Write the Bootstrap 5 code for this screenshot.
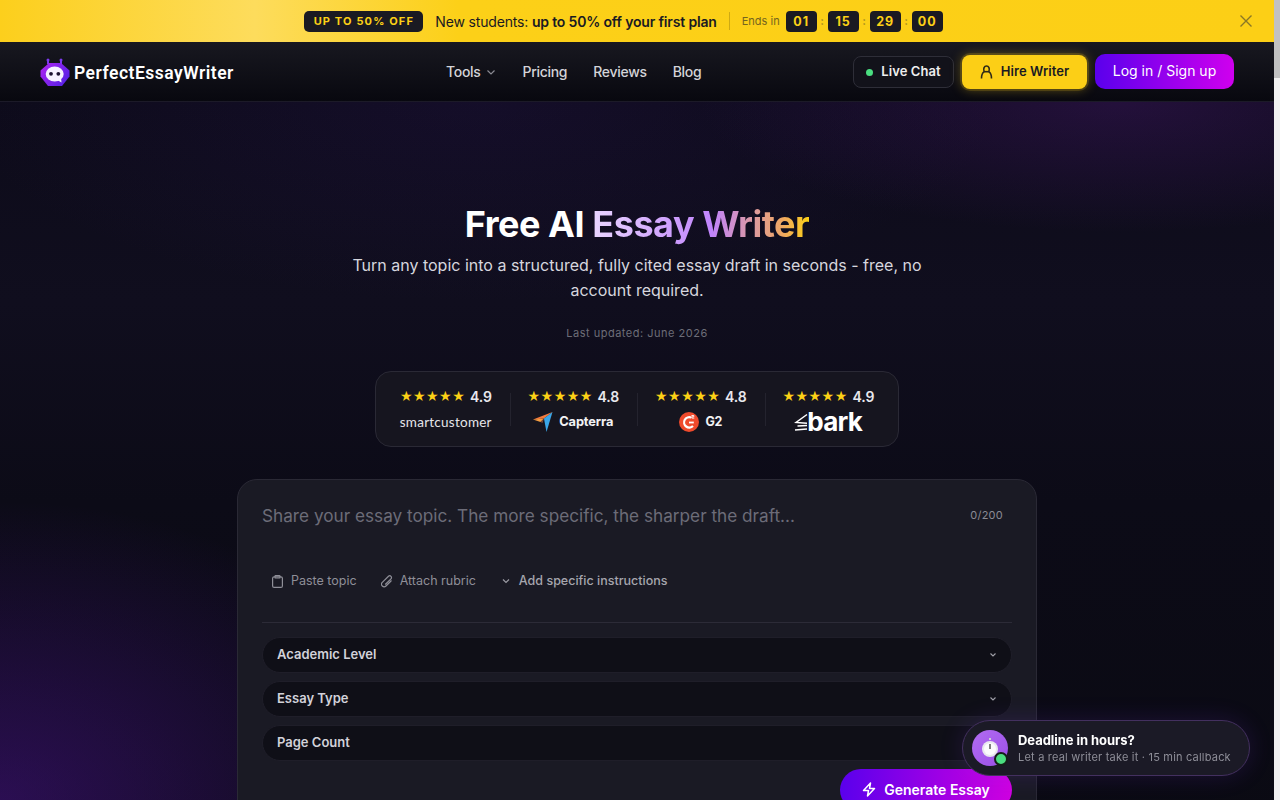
<!DOCTYPE html>
<html lang="en">
<head>
  <meta charset="UTF-8">
  <meta name="viewport" content="width=device-width, initial-scale=1.0">
  <title>Free AI Essay Writer - PerfectEssayWriter</title>
  <link href="https://cdn.jsdelivr.net/npm/bootstrap@5.3.2/dist/css/bootstrap.min.css" rel="stylesheet">
  <style>
    body { background: #0a0a12; font-family: Inter, "Liberation Sans", sans-serif; color: #fff; padding-right: 6px; overflow-x: hidden; }
    .fake-scroll { position: fixed; top: 0; right: 0; bottom: 0; width: 6px; background: #f1f1f1; z-index: 9; }
    .fake-thumb { height: 78px; background: #c1c1c1; }

    .promo-bar { height: 42px; padding-right: 27px; background: linear-gradient(90deg, #fccf1c 0, #fddc5c 20%, #fcd018 36%, #fccf16 100%); color: #1a1a22; font-size: 14px; }
    .promo-tag { background: #1a1a22; color: #fcd116; font-size: 11px; font-weight: 700; letter-spacing: 1.15px; border-radius: 5px; width: 119px; text-align: center; height: 21px; line-height: 21px; }
    .promo-text { letter-spacing: -.17px; margin-left: 12px; }
    .promo-sep { width: 1px; height: 18px; background: rgba(0,0,0,.18); margin: 0 12px; }
    .promo-ends { font-size: 11px; color: #75651f; margin-right: 6px; }
    .time-box { width: 31px; height: 21px; background: #1a1a22; color: #fcd116; font-size: 12.5px; font-weight: 700; letter-spacing: 1px; border-radius: 4px; line-height: 21px; text-align: center; }
    .time-colon { width: 11px; text-align: center; color: #a58c22; font-size: 11px; font-weight: 700; }
    .promo-close { right: 21px; top: 14px; background: none; border: 0; padding: 0; line-height: 0; }

    .top-nav { height: 60px; padding: 0 40px; background: linear-gradient(180deg, #181820, #08080f); border-bottom: 1px solid #1c1a28; }
    .brand-link { width: 194px; flex: none; margin-top: 2px; }
    .brand-name { font-family: Roboto, sans-serif; font-size: 17.5px; font-weight: 600; color: #fff; letter-spacing: .5px; padding-top: 1px; }
    .nav-items { gap: 26px; margin-left: 212px; }
    .nav-items a { color: #d4d4d8; font-size: 14px; letter-spacing: -.3px; text-decoration: none; font-weight: 500; }
    .nav-right { padding-top: 1px; }
    .btn-chat, .btn-hire { font-size: 13px; font-weight: 600; color: #eee; letter-spacing: .08px; }
    .btn-chat { width: 101px; height: 32px; border: 1px solid #2e2e38; border-radius: 8px; background: #12121a; padding: 0; }
    .chat-dot { width: 7px; height: 7px; background: #4ade80; border-radius: 50%; }
    .btn-hire { width: 125px; height: 34px; border: 0; border-radius: 8px; background: #fccf16; color: #1a1a22; padding: 0; box-shadow: 0 0 12px rgba(252,207,22,.38), 0 0 0 2px rgba(252,207,22,.16); }
    .btn-login { width: 139px; height: 35px; margin-bottom: 1px; border: 0; border-radius: 10px; background: linear-gradient(90deg, #5a00ec, #cf00ee); color: #fff; font-size: 14px; padding: 0 0 2px; }

    .hero-wrap { padding-top: 100px; padding-bottom: 60px;
      background:
        radial-gradient(420px 130px at 1120px 0, rgba(88,28,135,.3), transparent),
        radial-gradient(520px 200px at 480px 0, rgba(60,28,120,.16), transparent),
        radial-gradient(440px 300px at 0 699px, rgba(88,20,170,.42), transparent),
        linear-gradient(180deg, #0d0b1a 0, #100e1e 200px, #0c0b17 400px, #0a0a12 100%); }
    .hero-title { font-size: 36px; font-weight: 700; line-height: 44px; letter-spacing: -.45px; margin: 0 0 7px; }
    .hero-accent { background: linear-gradient(90deg, #e9d5ff 0, #c084fc 55%, #f0a860 88%, #fcd116 100%); -webkit-background-clip: text; background-clip: text; color: transparent; }
    .hero-sub { width: 600px; font-size: 16px; line-height: 25px; color: #d6d6de; margin: 0 auto 22px; }
    .hero-date { font-size: 11px; color: #6d6d78; letter-spacing: .5px; line-height: 16px; margin-bottom: 30px; }

    .rating-strip { width: 524px; height: 76px; background: #16151f; border: 1px solid #2a2935; border-radius: 16px; padding: 0 6px; }
    .rating-item { width: 128px; height: 100%; padding-top: 4px; }
    .rating-item + .rating-item::before { content: ""; position: absolute; left: 0; top: 21px; height: 33px; width: 1px; background: #24232e; }
    .stars { color: #fcd116; font-size: 12.5px; line-height: 18px; }
    .score { font-size: 14px; font-weight: 600; color: #e8e8ee; margin-left: 5px; line-height: 18px; letter-spacing: -.1px; }
    .logo-row { height: 24px; margin-top: 4px; }
    .logo-smart { font-family: Lato, sans-serif; font-size: 13.5px; color: #e6e6ea; letter-spacing: .25px; }
    .logo-cap { font-size: 12.8px; font-weight: 700; color: #f2f2f4; letter-spacing: -.1px; margin-left: 2px; }
    .logo-g2 { font-size: 12.5px; letter-spacing: -.3px; }
    .logo-bark { font-size: 26px; font-weight: 700; color: #fff; letter-spacing: -.7px; line-height: 24px; margin-left: -1px; }

    .writer-card { width: 800px; margin-top: 32px; background: #1a1a24; border: 1px solid #2a2935; border-radius: 20px; padding: 24px; overflow: hidden; }
    .writer-card::before { content: ""; position: absolute; left: 60px; right: 60px; top: -1px; height: 1px; background: linear-gradient(90deg, transparent, #7e22ce 50%, #d08a3a 80%, transparent); }
    .topic-input { background: transparent; border: 0; resize: none; outline: 0; width: 100%; height: 51px; margin-top: -1px; padding: 0; color: #fff; font-size: 17.2px; line-height: 26px; font-family: inherit; }
    .topic-input::placeholder { color: #6c6c78; }
    .char-count { right: 33px; top: 27px; font-size: 11px; color: #8a8a94; letter-spacing: .25px; }
    .tool-row { height: 40px; margin: 7px 0 21px 10px; gap: 25px; }
    .tool-link { color: #8f8f98; font-size: 12.5px; background: none; border: 0; padding: 0; }
    .tool-attach { gap: 7px; margin-left: -1px; }
    .tool-strong { color: #a6a6ae; font-weight: 500; }
    .card-rule { border-top: 1px solid #2c2b37; opacity: 1; margin: 0 0 14px; }
    .field-pill { height: 36px; border-radius: 18px; background-color: #0f0f17; border: 1px solid #1f1e29; color: #d2d2da; font-size: 13px; font-weight: 600; padding: 0 14px; margin-bottom: 8px; }
    .btn-generate { width: 172px; height: 42px; border: 0; border-radius: 21px; background: linear-gradient(90deg, #5a00ec, #cf00e0); color: #fff; font-size: 14px; font-weight: 600; padding: 0 0 2px; }

    .deadline-pop { position: fixed; left: 962px; top: 720px; width: 288px; height: 56px; border-radius: 28px; background: #1b1a26; border: 1px solid #43305f; box-shadow: 0 0 24px rgba(124,58,237,.16); padding-left: 9px; gap: 10px; z-index: 5; }
    .pop-icon { width: 36px; height: 36px; border-radius: 50%; background: linear-gradient(135deg, #b26cf2, #9a4fe6); flex: none; }
    .pop-dot { right: 0; bottom: 0; width: 14px; height: 14px; border-radius: 50%; background: #4ade80; border: 2px solid #152018; }
    .pop-title { font-size: 13px; font-weight: 700; color: #fff; line-height: 17px; letter-spacing: -.05px; }
    .pop-sub { font-size: 11px; color: #8d8d97; line-height: 16px; letter-spacing: .2px; }
  </style>
</head>
<body>
  <div class="fake-scroll"><div class="fake-thumb"></div></div>

  <div class="promo-bar position-relative d-flex align-items-center justify-content-center">
    <span class="promo-tag">UP TO 50% OFF</span>
    <span class="promo-text">New students: <strong class="fw-semibold">up to 50% off your first plan</strong></span>
    <span class="promo-sep"></span>
    <span class="promo-ends">Ends in</span>
    <span class="d-flex align-items-center">
      <span class="time-box">01</span><span class="time-colon">:</span>
      <span class="time-box">15</span><span class="time-colon">:</span>
      <span class="time-box">29</span><span class="time-colon">:</span>
      <span class="time-box">00</span>
    </span>
    <button class="promo-close position-absolute" aria-label="Close">
      <svg width="14" height="14" viewBox="0 0 14 14" fill="none" stroke="#8a7726" stroke-width="1.4"><path d="M1.500 1.500l11 11M12.500 1.500l-11 11"/></svg>
    </button>
  </div>

  <nav class="top-nav d-flex align-items-center">
    <a href="#" class="brand-link d-flex align-items-center gap-1 text-decoration-none">
      <svg width="30" height="30" viewBox="0 0 30 30">
        <defs><linearGradient id="botg" x1="0" y1="0" x2="1" y2="0.6"><stop offset="0" stop-color="#b026f0"/><stop offset="1" stop-color="#5b21e6"/></linearGradient></defs>
        <path d="M8 6V2M21 6V2" stroke="#7c3aed" stroke-width="2"/>
        <circle cx="8" cy="2" r="1.500" fill="#7c3aed"/><circle cx="21" cy="2" r="1.500" fill="#7c3aed"/>
        <path d="M9 5h12l8.500 7.500v6L22 28H8L.5 18.500v-6z" fill="url(#botg)"/>
        <ellipse cx="14.700" cy="16" rx="9" ry="7.500" fill="#f6f2ff"/>
        <path d="M17 22l4.500 2.500-.5-5z" fill="#f6f2ff"/>
        <circle cx="11" cy="15.800" r="1.900" fill="#1c1330"/><circle cx="18.300" cy="15.800" r="1.900" fill="#1c1330"/>
      </svg>
      <span class="brand-name">PerfectEssayWriter</span>
    </a>
    <div class="nav-items d-flex align-items-center">
      <a href="#" class="d-flex align-items-center gap-1">Tools
        <svg width="12" height="12" viewBox="0 0 12 12" fill="none" stroke="#8a8a92" stroke-width="1.200"><path d="M2.500 4.500L6 8l3.500-3.500"/></svg></a>
      <a href="#">Pricing</a>
      <a href="#">Reviews</a>
      <a href="#">Blog</a>
    </div>
    <div class="nav-right ms-auto d-flex align-items-center gap-2">
      <button class="btn-chat d-flex align-items-center justify-content-center gap-2"><span class="chat-dot"></span>Live Chat</button>
      <button class="btn-hire d-flex align-items-center justify-content-center gap-2">
        <svg width="13" height="14" viewBox="0 0 13 14" fill="none" stroke="#2e2a18" stroke-width="1.600"><path d="M1.500 13.500c0-3.500.8-5.500 2.600-6.800C3 3.500 4.300 1 6.500 1s3.500 2.500 2.400 5.700c1.800 1.300 2.600 3.300 2.600 6.800"/><path d="M4.100 6.700h4.800"/></svg>
        Hire Writer</button>
      <button class="btn-login">Log in / Sign up</button>
    </div>
  </nav>

  <main class="hero-wrap d-flex flex-column align-items-center text-center">
    <h1 class="hero-title">Free AI <span class="hero-accent">Essay Writer</span></h1>
    <p class="hero-sub">Turn any topic into a structured, fully cited essay draft in seconds - free, no account required.</p>
    <div class="hero-date">Last updated: June 2026</div>

    <div class="rating-strip d-flex">
      <div class="rating-item position-relative d-flex flex-column align-items-center justify-content-center">
        <div class="d-flex align-items-center"><span class="stars">★★★★★</span><span class="score">4.9</span></div>
        <div class="logo-row d-flex align-items-center"><span class="logo-smart">smartcustomer</span></div>
      </div>
      <div class="rating-item position-relative d-flex flex-column align-items-center justify-content-center">
        <div class="d-flex align-items-center"><span class="stars">★★★★★</span><span class="score">4.8</span></div>
        <div class="logo-row d-flex align-items-center gap-1">
          <svg width="20" height="20" viewBox="0 0 20 20"><path d="M0 7.500l11-1-3.500 3.500z" fill="#f59e42"/><path d="M19.500 0L11 6.500 0 7.500z" fill="#f47a3c"/><path d="M19.500 0L11 6.500 13.500 20z" fill="#3aa6e8"/><path d="M11 6.500l-3.500 3.500 2 1z" fill="#7a4a3a"/></svg>
          <span class="logo-cap">Capterra</span>
        </div>
      </div>
      <div class="rating-item position-relative d-flex flex-column align-items-center justify-content-center">
        <div class="d-flex align-items-center"><span class="stars">★★★★★</span><span class="score">4.8</span></div>
        <div class="logo-row d-flex align-items-center gap-1">
          <svg width="20" height="20" viewBox="0 0 20 20"><circle cx="10" cy="10" r="10" fill="#ef4a2c"/><path d="M14 14a5.200 5.200 0 1 1-1.800-8.500" fill="none" stroke="#fff" stroke-width="2.200"/><path d="M10 10.500h4.800" stroke="#fff" stroke-width="1.800"/><path d="M12.500 3.500h2.300v1.300h-2v1.300h2.500" fill="none" stroke="#fff" stroke-width=".9"/></svg>
          <span class="logo-cap logo-g2">G2</span>
        </div>
      </div>
      <div class="rating-item position-relative d-flex flex-column align-items-center justify-content-center">
        <div class="d-flex align-items-center"><span class="stars">★★★★★</span><span class="score">4.9</span></div>
        <div class="logo-row d-flex align-items-center">
          <svg width="14" height="20" viewBox="0 0 14 20" fill="none" stroke="#fff" stroke-width="1.500"><path d="M13 2.500L2 10.500l11 .7M3.500 14L13 13.500M1 18l12-1"/></svg>
          <span class="logo-bark">bark</span>
        </div>
      </div>
    </div>

    <section class="writer-card position-relative text-start">
      <textarea class="topic-input d-block" placeholder="Share your essay topic. The more specific, the sharper the draft..."></textarea>
      <span class="char-count position-absolute">0/200</span>
      <div class="tool-row d-flex align-items-center">
        <button class="tool-link d-flex align-items-center gap-2">
          <svg width="11" height="13" viewBox="0 0 11 13" fill="none" stroke="#8f8f98" stroke-width="1.200"><rect x=".6" y="1.800" width="9.800" height="10.600" rx="1.500"/><rect x="3" y=".6" width="5" height="2.400" rx=".6"/></svg>
          Paste topic</button>
        <button class="tool-link tool-attach d-flex align-items-center">
          <svg width="12" height="13" viewBox="0 0 12 13" fill="none" stroke="#8f8f98" stroke-width="1.200"><path d="M10.500 5.500L5 11a2.600 2.600 0 0 1-3.700-3.700L7.500 1.300a1.700 1.700 0 0 1 2.500 2.500L4.200 9.500"/></svg>
          Attach rubric</button>
        <button class="tool-link tool-strong d-flex align-items-center gap-2">
          <svg width="10" height="10" viewBox="0 0 10 10" fill="none" stroke="#9a9aa2" stroke-width="1.200"><path d="M2 3.500L5 6.500l3-3"/></svg>
          Add specific instructions</button>
      </div>
      <hr class="card-rule">
      <div class="field-pill d-flex align-items-center justify-content-between">Academic Level
        <svg width="8" height="8" viewBox="0 0 8 8" fill="none" stroke="#a0a0a8" stroke-width="1.100"><path d="M1.500 2.500L4 5l2.500-2.500"/></svg></div>
      <div class="field-pill d-flex align-items-center justify-content-between">Essay Type
        <svg width="8" height="8" viewBox="0 0 8 8" fill="none" stroke="#a0a0a8" stroke-width="1.100"><path d="M1.500 2.500L4 5l2.500-2.500"/></svg></div>
      <div class="field-pill d-flex align-items-center justify-content-between">Page Count
        <svg width="8" height="8" viewBox="0 0 8 8" fill="none" stroke="#a0a0a8" stroke-width="1.100"><path d="M1.500 2.500L4 5l2.500-2.500"/></svg></div>
      <div class="d-flex justify-content-end">
        <button class="btn-generate d-flex align-items-center justify-content-center gap-2">
          <svg width="14" height="15" viewBox="0 0 14 15" fill="none" stroke="#fff" stroke-width="1.500" stroke-linejoin="round"><path d="M8.500 1L1.500 8.500h5l-1 5.500 7-7.500h-5z"/></svg>
          Generate Essay</button>
      </div>
    </section>
  </main>

  <aside class="deadline-pop d-flex align-items-center">
    <div class="pop-icon position-relative d-flex align-items-center justify-content-center">
      <svg width="20" height="22" viewBox="0 0 20 22"><path d="M9 1h2v2H9z" fill="#cfcfd6"/><circle cx="10" cy="12" r="8" fill="#e8e8ee"/><circle cx="10" cy="12" r="6" fill="#fbfbfd"/><path d="M10 7v5" stroke="#555" stroke-width="1.500"/></svg>
      <span class="pop-dot position-absolute"></span>
    </div>
    <div class="text-start">
      <div class="pop-title">Deadline in hours?</div>
      <div class="pop-sub">Let a real writer take it · 15 min callback</div>
    </div>
  </aside>
  <script src="https://cdn.jsdelivr.net/npm/bootstrap@5.3.2/dist/js/bootstrap.bundle.min.js"></script>
</body>
</html>
